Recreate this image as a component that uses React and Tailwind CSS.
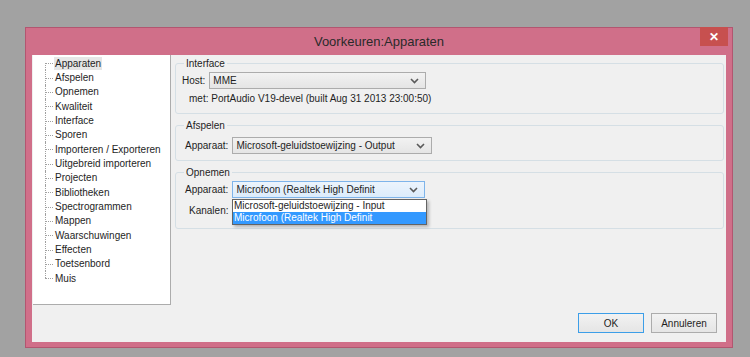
import React from "react";

const font = { fontFamily: '"Liberation Sans", Arial, sans-serif' };

const treeItems = [
  "Apparaten",
  "Afspelen",
  "Opnemen",
  "Kwaliteit",
  "Interface",
  "Sporen",
  "Importeren / Exporteren",
  "Uitgebreid importeren",
  "Projecten",
  "Bibliotheken",
  "Spectrogrammen",
  "Mappen",
  "Waarschuwingen",
  "Effecten",
  "Toetsenbord",
  "Muis",
];

function Chevron() {
  return (
    <svg width="9" height="6" viewBox="0 0 9 6" className="shrink-0">
      <path d="M1 1 L4.5 4.5 L8 1" fill="none" stroke="#5a5a5a" strokeWidth="1.6" />
    </svg>
  );
}

function Select({ value, width, focused }) {
  return (
    <div
      className={
        "flex h-[17px] items-center justify-between border pl-[3px] pr-[6px] " +
        (focused
          ? "border-[#7eb4ea] bg-gradient-to-b from-[#ecf4fc] to-[#dcecfc]"
          : "border-[#acacac] bg-gradient-to-b from-[#f2f2f2] to-[#e5e5e5]")
      }
      style={{ width }}
    >
      <span className="truncate">{value}</span>
      <Chevron />
    </div>
  );
}

function Group({ title, children, className }) {
  return (
    <fieldset className={"rounded-[3px] border border-[#d5dfe5] px-[6px] " + (className || "")}>
      <legend className="ml-[2px] px-[2px] text-[10px] leading-[11px]">{title}</legend>
      {children}
    </fieldset>
  );
}

export default function App() {
  return (
    <div className="h-[357px] w-[750px] overflow-hidden bg-[#a2a2a2] pl-[25px] pt-[27px] text-[10px] text-[#1e1e1e]" style={font}>
      <div className="flex h-[321px] w-[708px] flex-col border border-[#b25670] bg-[#d06f89]">
        {/* Title bar */}
        <div className="relative flex h-[27px] shrink-0 items-center justify-center">
          <span className="text-[13px] text-[#2a2a2a]">Voorkeuren:Apparaten</span>
          <div className="absolute right-[4px] top-[-1px] flex h-[19px] w-[28px] items-center justify-center bg-[#c7504f] text-[12px] font-bold text-white">
            ✕
          </div>
        </div>
        {/* Client area */}
        <div className="mx-[6px] mb-[5px] flex flex-1 bg-[#f0f0f0]">
          {/* Tree */}
          <div className="ml-[1px] h-[250px] w-[138px] shrink-0 border-b border-r border-[#acacac] bg-white pl-[12px] pt-[1px]">
            {treeItems.map((t, i) => (
              <div key={t} className="flex h-[14.35px] items-center">
                <div className="relative h-full w-[8px] shrink-0">
                  <div
                    className={
                      "absolute left-0 w-0 border-l border-dotted border-[#a0a0a0] " +
                      (i === 0 ? "top-1/2 bottom-0" : i === treeItems.length - 1 ? "top-0 bottom-1/2" : "top-0 bottom-0")
                    }
                  />
                  <div className="absolute left-0 right-0 top-1/2 h-0 border-t border-dotted border-[#a0a0a0]" />
                </div>
                <span
                  className={
                    "ml-[1px] whitespace-nowrap px-[1px] leading-[13px] " + (i === 0 ? "bg-[#e6e6e6]" : "")
                  }
                >
                  {t}
                </span>
              </div>
            ))}
          </div>
          {/* Right panel */}
          <div className="flex flex-1 flex-col pl-[4px] pr-[2px] pt-[3px]">
            <Group title="Interface" className="h-[56px]">
              <div className="mt-[3px] flex items-center gap-[4px]">
                <span>Host:</span>
                <Select value="MME" width={217} />
              </div>
              <div className="ml-[7px] mt-[2px]">met: PortAudio V19-devel (built Aug 31 2013 23:00:50)</div>
            </Group>
            <Group title="Afspelen" className="mt-[6px] h-[41px]">
              <div className="ml-[3px] mt-[6px] flex items-center gap-[4px]">
                <span>Apparaat:</span>
                <Select value="Microsoft-geluidstoewijzing - Output" width={200} />
              </div>
            </Group>
            <Group title="Opnemen" className="mt-[6px] h-[62px]">
              <div className="relative ml-[3px] mt-[3px] flex items-center gap-[4px]">
                <span>Apparaat:</span>
                <Select value="Microfoon (Realtek High Definit" width={193} focused />
                <div className="absolute left-[47px] top-[18px] z-10 w-[195px] border border-[#646464] bg-white shadow-[2px_2px_3px_rgba(0,0,0,0.25)]">
                  <div className="h-[12px] pl-[1px] leading-[12px]">Microsoft-geluidstoewijzing - Input</div>
                  <div className="h-[12px] bg-[#3399ff] pl-[1px] leading-[12px] text-white">Microfoon (Realtek High Definit</div>
                </div>
              </div>
              <div className="ml-[7px] mt-[5px]">Kanalen:</div>
            </Group>
            <div className="flex-1" />
            <div className="mb-[9px] mr-[7px] flex justify-end gap-[7px]">
              <div className="flex h-[20px] w-[66px] items-center justify-center border border-[#3c9ee8] bg-gradient-to-b from-[#f2f2f2] to-[#e5e5e5]">
                OK
              </div>
              <div className="flex h-[20px] w-[66px] items-center justify-center border border-[#acacac] bg-gradient-to-b from-[#f2f2f2] to-[#e5e5e5]">
                Annuleren
              </div>
            </div>
          </div>
        </div>
      </div>
    </div>
  );
}
